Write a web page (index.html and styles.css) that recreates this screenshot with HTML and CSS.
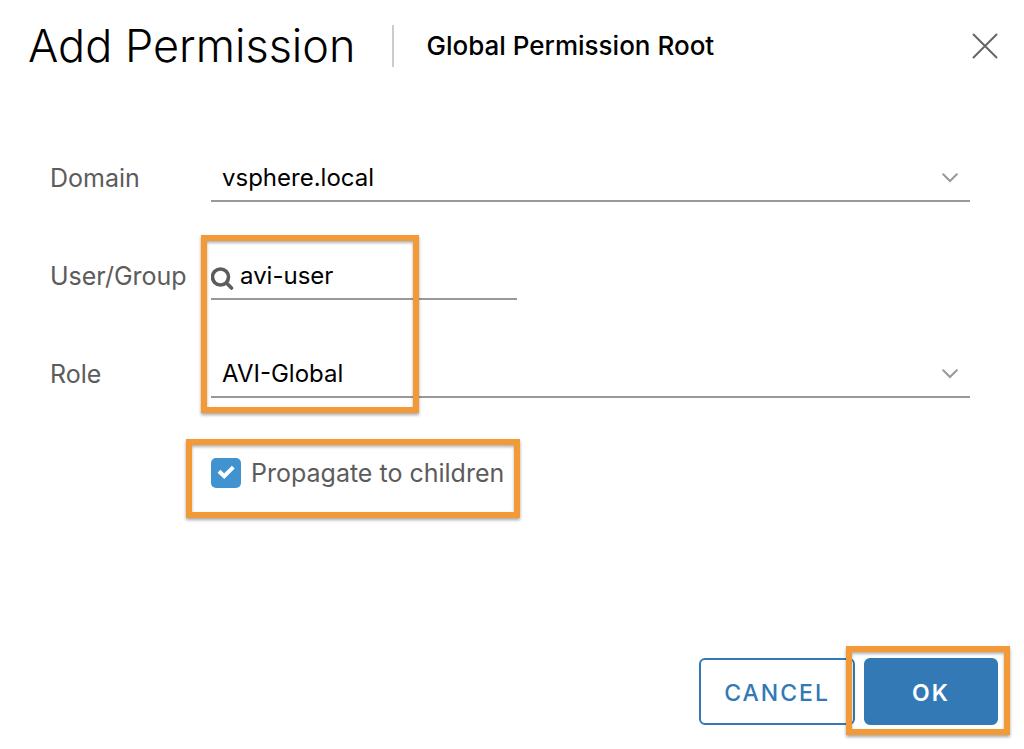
FILE: index.html
```html
<!DOCTYPE html>
<html lang="en">
<head>
    <meta charset="UTF-8">
    <meta name="viewport" content="width=device-width, initial-scale=1.0">
    <title>Add Permission</title>
    <link rel="stylesheet" href="styles.css">
</head>
<body>

    <main class="dialog">
        <header class="dialog-header">
            <h1 class="title">Add Permission</h1>
            <p class="subtitle">Global Permission Root</p>
            <button type="button" class="close" aria-label="Close">
                <svg width="26" height="26" viewBox="0 0 26 26" fill="none" stroke="#666" stroke-width="2" stroke-linecap="round">
                    <path d="M1.5 1.5l23 23M24.5 1.5l-23 23"/>
                </svg>
            </button>
        </header>

        <form class="permission-form" id="permissionForm">
            <div class="form-row">
                <label for="domain">Domain</label>
                <div class="field">
                    <select id="domain">
                        <option>vsphere.local</option>
                    </select>
                    <svg class="caret" width="16" height="10" viewBox="0 0 16 10" fill="none" stroke="#999" stroke-width="2" stroke-linecap="round">
                        <path d="M1.2 1.2L8 8l6.800-6.800"/>
                    </svg>
                </div>
            </div>

            <div class="marked-rows">
                <div class="form-row">
                    <label for="user">User/Group</label>
                    <div class="field field-search">
                        <svg class="search" width="23" height="24" viewBox="0 0 23 24" fill="none" stroke="#5c5c5c">
                            <circle cx="9.500" cy="11" r="8" stroke-width="3.600"/>
                            <path d="M15.500 17l5 5" stroke-width="3.600" stroke-linecap="round"/>
                        </svg>
                        <input type="text" id="user" value="avi-user">
                    </div>
                </div>

                <div class="form-row">
                    <label for="role">Role</label>
                    <div class="field">
                        <select id="role">
                            <option>AVI-Global</option>
                        </select>
                        <svg class="caret" width="16" height="10" viewBox="0 0 16 10" fill="none" stroke="#999" stroke-width="2" stroke-linecap="round">
                            <path d="M1.2 1.2L8 8l6.800-6.800"/>
                        </svg>
                    </div>
                </div>
                <span class="highlight highlight-fields"></span>
            </div>

            <div class="check-row">
                <input type="checkbox" id="propagate" checked>
                <svg class="tick" width="30" height="30" viewBox="0 0 30 30" fill="none" stroke="#fff" stroke-width="4">
                    <path d="M8 13.200l5.200 5L22.300 9.200"/>
                </svg>
                <label for="propagate">Propagate to children</label>
                <span class="highlight highlight-check"></span>
            </div>
        </form>

        <footer class="dialog-footer">
            <button type="button" class="btn">CANCEL</button>
            <div class="ok-wrap">
                <button type="submit" form="permissionForm" class="btn btn-primary">OK</button>
                <span class="highlight highlight-ok"></span>
            </div>
        </footer>
    </main>

</body>
</html>
```
FILE: styles.css
```css
* {
    box-sizing: border-box;
}
body {
    margin: 0;
    background-color: #fff;
    color: #000;
    font-family: Metropolis, Inter, "Liberation Sans", sans-serif;
    font-size: 24px;
}
button, input, select {
    font: inherit;
}
.dialog {
    padding: 20px 26px 24px 28px;
}

/* Header */
.dialog-header {
    display: flex;
    align-items: center;
    height: 52px;
}
.title {
    margin: 0;
    font-size: 45px;
    font-weight: 300;
    line-height: 52px;
    white-space: nowrap;
}
.subtitle {
    margin: 0 0 0 36px;
    padding-left: 33px;
    border-left: 2px solid #ccc;
    font-size: 26px;
    font-weight: 500;
    line-height: 42px;
}
.close {
    display: flex;
    margin-left: auto;
    padding: 0;
    border: none;
    background: none;
    cursor: pointer;
}

/* Form */
.permission-form {
    padding: 82px 28px 0 22px;
}
.form-row {
    display: grid;
    grid-template-columns: 161px 1fr;
    align-items: center;
    margin-bottom: 50px;
}
.form-row label, .check-row label {
    color: #5c5c5c;
    font-size: 25px;
}
.field {
    position: relative;
    display: flex;
    align-items: center;
    height: 48px;
    border-bottom: 2px solid #999;
}
.field-search {
    width: 306px;
    gap: 6px;
}
.search {
    flex: none;
    margin-top: 6px;
}
.field select, .field input {
    flex: 1;
    min-width: 0;
    height: 46px;
    padding: 0;
    border: none;
    outline: none;
    background: transparent;
    color: #000;
    appearance: none;
}
.field select {
    padding: 0 40px 0 11px;
}
.caret {
    position: absolute;
    right: 12px;
    top: 19px;
    pointer-events: none;
}
.marked-rows, .check-row, .ok-wrap {
    position: relative;
}
.check-row {
    display: flex;
    align-items: center;
    gap: 10px;
    width: fit-content;
    height: 50px;
    margin-left: 161px;
}
.check-row input {
    width: 30px;
    height: 30px;
    margin: 0;
    border-radius: 5px;
    background-color: #4193cf;
    appearance: none;
}
.tick {
    position: absolute;
    left: 0;
    top: 10px;
    pointer-events: none;
}
.check-row input:not(:checked) + .tick {
    display: none;
}

/* Footer */
.dialog-footer {
    display: flex;
    justify-content: flex-end;
    gap: 9px;
    margin-top: 160px;
}
.btn {
    min-width: 134px;
    height: 67px;
    padding: 2px 23px 0;
    border: 2px solid #3279b5;
    border-radius: 6px;
    background-color: #fff;
    color: #3279b5;
    font-size: 23px;
    font-weight: 500;
    letter-spacing: 2px;
    cursor: pointer;
}
.btn-primary {
    background-color: #3279b5;
    color: #fff;
    font-weight: 600;
}

/* Orange frames over the controls */
.highlight {
    position: absolute;
    border: 6px solid #f29a38;
    box-shadow: 0 2px 3px rgba(0, 0, 0, 0.35), inset 0 2px 3px rgba(0, 0, 0, 0.3);
    pointer-events: none;
}
.highlight-fields {
    left: 151px;
    top: -17px;
    width: 218px;
    height: 178px;
}
.highlight-check {
    left: -25px;
    right: -16px;
    top: -9px;
    bottom: -20px;
}
.highlight-ok {
    left: -18px;
    right: -12px;
    top: -12px;
    bottom: -10px;
}
```
